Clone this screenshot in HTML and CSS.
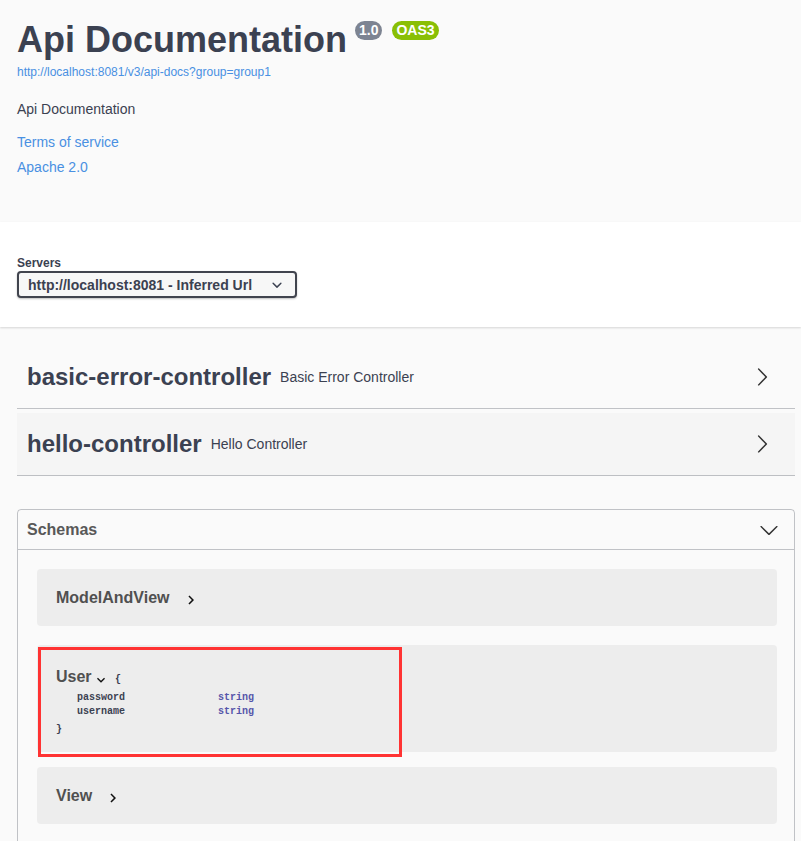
FILE: index.html
```html
<!DOCTYPE html>
<html lang="en">
<head>
<meta charset="utf-8">
<title>Swagger UI</title>
<link rel="stylesheet" href="styles.css">
</head>
<body>
<div class="info">
  <div class="title-row">
    <h2 class="title">Api Documentation</h2>
    <span class="badge badge-version">1.0</span>
    <span class="badge badge-oas">OAS3</span>
  </div>
  <a class="url" href="#">http://localhost:8081/v3/api-docs?group=group1</a>
  <p class="desc">Api Documentation</p>
  <a class="link link-terms" href="#">Terms of service</a>
  <a class="link link-license" href="#">Apache 2.0</a>
</div>

<div class="schemes">
  <div class="servers-label">Servers</div>
  <div class="select">
    <span>http://localhost:8081 - Inferred Url</span>
    <svg class="select-arrow" width="20" height="20" viewBox="0 0 20 20"><path d="M13.418 7.859a.695.695 0 0 1 .978 0 .68.68 0 0 1 0 .969l-3.908 3.83a.697.697 0 0 1-.979 0l-3.908-3.830a.68.68 0 0 1 0-.969.695.695 0 0 1 .978 0L10 11l3.418-3.141z"/></svg>
  </div>
</div>

<div class="wrapper">
  <div class="tag">
    <span class="tag-name">basic-error-controller</span>
    <span class="tag-desc">Basic Error Controller</span>
    <svg class="arrow" width="20" height="20" viewBox="0 0 20 20"><path d="M13.25 10L6.109 2.58a.697.697 0 0 1 0-.979.68.68 0 0 1 .969 0l7.83 7.908a.697.697 0 0 1 0 .979l-7.83 7.908c-.268.271-.701.271-.969 0a.697.697 0 0 1 0-.979L13.25 10z"/></svg>
  </div>
  <div class="tag tag-hover">
    <span class="tag-name">hello-controller</span>
    <span class="tag-desc">Hello Controller</span>
    <svg class="arrow" width="20" height="20" viewBox="0 0 20 20"><path d="M13.25 10L6.109 2.58a.697.697 0 0 1 0-.979.68.68 0 0 1 .969 0l7.83 7.908a.697.697 0 0 1 0 .979l-7.83 7.908c-.268.271-.701.271-.969 0a.697.697 0 0 1 0-.979L13.25 10z"/></svg>
  </div>

  <section class="models">
    <div class="models-header">
      <h4>Schemas</h4>
      <svg class="arrow" width="20" height="20" viewBox="0 0 20 20"><path d="M17.418 6.109c.272-.268.709-.268.979 0s.271.701 0 .969l-7.908 7.83c-.27.268-.707.268-.979 0l-7.908-7.830c-.27-.268-.27-.701 0-.969.271-.268.709-.268.979 0L10 13.25l7.418-7.141z"/></svg>
    </div>
    <div class="models-body">
      <div class="model model-collapsed model-first">
        <span class="model-title">ModelAndView</span>
        <svg class="toggle-right" width="18" height="18" viewBox="0 0 24 24"><path d="M10 6L8.59 7.41 13.17 12l-4.58 4.59L10 18l6-6z"/></svg>
      </div>
      <div class="model model-user">
        <div class="user-title-row">
          <span class="model-title">User</span>
          <svg class="toggle-down" width="16" height="16" viewBox="0 0 24 24"><path d="M16.59 8.59L12 13.17 7.41 8.59 6 10l6 6 6-6z"/></svg>
          <span class="brace brace-open">{</span>
        </div>
        <div class="props">
          <span class="prop-name">password</span><span class="prop-type">string</span>
          <span class="prop-name">username</span><span class="prop-type">string</span>
        </div>
        <div class="brace brace-close">}</div>
        <div class="highlight"></div>
      </div>
      <div class="model model-collapsed">
        <span class="model-title">View</span>
        <svg class="toggle-right" width="18" height="18" viewBox="0 0 24 24"><path d="M10 6L8.59 7.41 13.17 12l-4.58 4.59L10 18l6-6z"/></svg>
      </div>
    </div>
  </section>
</div>
</body>
</html>
```

FILE: styles.css
```css
html, body {
  margin: 0;
  background: #fafafa;
  font-family: "Liberation Sans", Arial, sans-serif;
  color: #3b4151;
}

/* ---------- info ---------- */
.info {
  box-sizing: border-box;
  height: 222px;
  padding: 20px 17px 0;
}
.title-row {
  display: flex;
  align-items: flex-start;
}
.title {
  margin: 0;
  font-size: 36px;
  line-height: 40px;
  font-weight: 700;
  color: #3b4151;
}
.badge {
  margin-top: 1px;
  height: 19px;
  line-height: 19px;
  padding: 0 4px;
  border-radius: 10px;
  color: #fff;
  font-size: 14px;
  font-weight: 700;
}
.badge-version {
  background: #7d8492;
  margin-left: 8px;
}
.badge-oas {
  background: #89bf04;
  margin-left: 10px;
}
.url {
  display: block;
  margin-top: 5px;
  font-size: 12px;
  line-height: 14px;
  color: #4990e2;
  text-decoration: none;
}
.desc {
  margin: 22px 0 0;
  font-size: 14px;
  line-height: 16px;
}
.link {
  display: block;
  font-size: 14px;
  line-height: 16px;
  color: #4990e2;
  text-decoration: none;
}
.link-terms { margin-top: 17px; }
.link-license { margin-top: 9px; }

/* ---------- servers ---------- */
.schemes {
  background: #fff;
  box-shadow: 0 1px 2px 0 rgba(0, 0, 0, .15);
  padding: 34px 17px 29px;
}
.servers-label {
  font-size: 12px;
  line-height: 14px;
  font-weight: 700;
}
.select {
  margin-top: 1px;
  box-sizing: border-box;
  width: 280px;
  height: 27px;
  display: flex;
  align-items: center;
  justify-content: space-between;
  padding: 0 8px 0 9px;
  border: 2px solid #41444e;
  border-radius: 4px;
  background: #f7f7f7;
  box-shadow: 0 1px 2px 0 rgba(0, 0, 0, .25);
  font-size: 14px;
  line-height: 16px;
  font-weight: 700;
}
.select-arrow { fill: #3b4151; flex: none; }

/* ---------- tags ---------- */
.wrapper {
  padding: 19px 6px 0 17px;
}
.tag {
  display: flex;
  align-items: center;
  height: 62px;
  padding-left: 10px;
  margin-bottom: 4px;
  border-bottom: 1px solid rgba(59, 65, 81, .3);
}
.tag-hover { background: rgba(0, 0, 0, .02); }
.tag-name {
  font-size: 24px;
  line-height: 28px;
  font-weight: 700;
}
.tag-desc {
  flex: 1;
  padding-left: 9px;
  font-size: 14px;
  line-height: 16px;
}
.arrow {
  fill: #333;
  flex: none;
}
.tag .arrow { margin-right: 23px; }

/* ---------- schemas ---------- */
.models {
  margin-top: 33px;
  border: 1px solid rgba(59, 65, 81, .3);
  border-radius: 4px;
  padding-bottom: 40px;
}
.models-header {
  display: flex;
  align-items: center;
  justify-content: space-between;
  height: 39px;
  padding: 0 15px 0 9px;
  border-bottom: 1px solid rgba(59, 65, 81, .3);
}
.models-header h4 {
  margin: 0;
  font-size: 16px;
  line-height: 18px;
  font-weight: 700;
  color: #585858;
}
.models-body {
  padding: 19px 17px 0 19px;
}
.model {
  background: #ededed;
  border-radius: 4px;
  padding: 0 19px;
}
.model-collapsed {
  display: flex;
  align-items: center;
  height: 57px;
}
.model-first { margin-bottom: 19px; }
.model-title {
  font-size: 16px;
  line-height: 18px;
  font-weight: 700;
  color: #505050;
}
.toggle-right {
  margin-left: 12px;
  margin-top: 4px;
  fill: #111;
}

.model-user {
  position: relative;
  height: 107px;
  box-sizing: border-box;
  padding-top: 22.5px;
  margin-bottom: 15px;
}
.user-title-row {
  display: flex;
  align-items: flex-start;
}
.toggle-down {
  margin-left: 1.5px;
  margin-top: 4px;
  fill: #111;
}
.brace {
  font-family: "Liberation Mono", "Courier New", monospace;
  font-size: 10px;
  font-weight: 700;
  color: #3b4151;
}
.brace-open {
  margin-left: 6px;
  margin-top: 3px;
  line-height: 18px;
}
.props {
  margin: 2px 0 0 21px;
  display: grid;
  grid-template-columns: 141px auto;
  justify-content: start;
  font-family: "Liberation Mono", "Courier New", monospace;
  font-size: 10px;
  line-height: 14.5px;
  font-weight: 700;
}
.prop-name { color: #3b4151; }
.prop-type { color: #55a; }
.brace-close {
  margin-top: 3px;
  line-height: 14px;
}
.highlight {
  position: absolute;
  left: 1px;
  top: 2px;
  width: 364px;
  height: 110px;
  box-sizing: border-box;
  border: 3px solid #f33;
}
```
